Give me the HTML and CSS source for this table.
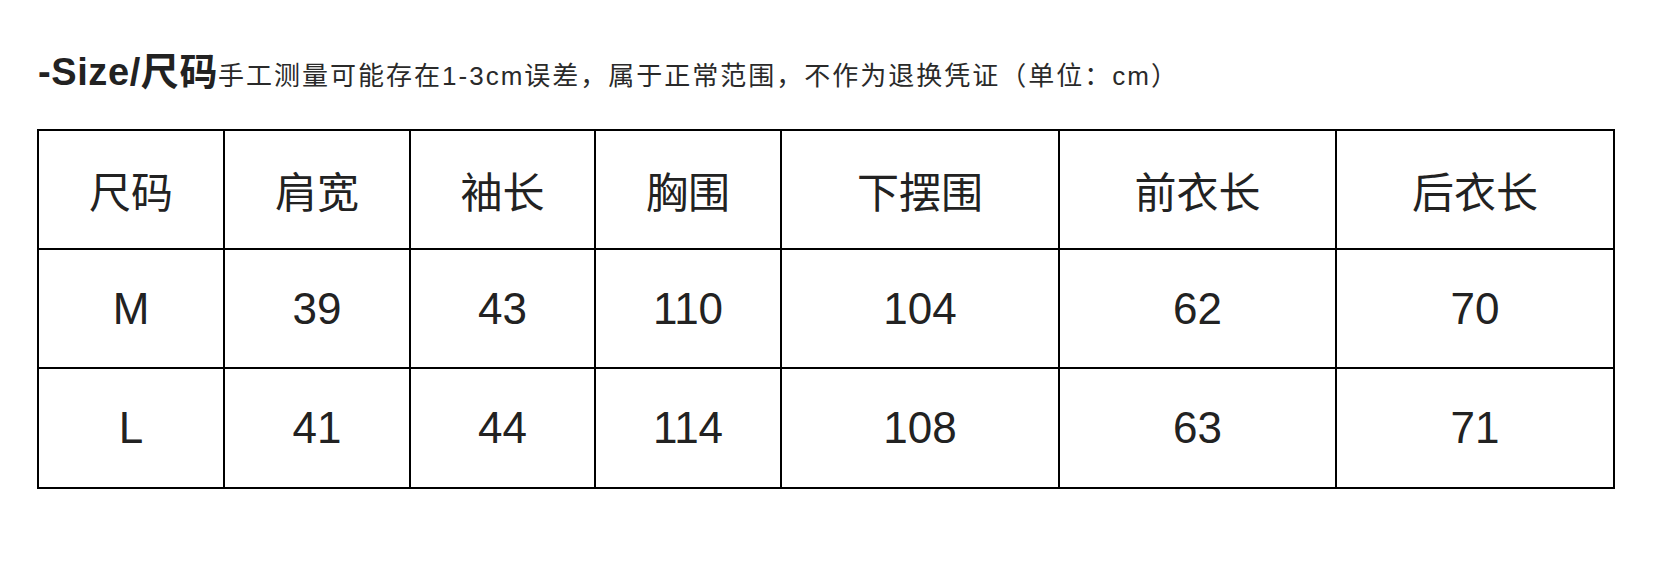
FILE: index.html
```html
<!DOCTYPE html>
<html lang="zh-CN">
<head>
<meta charset="utf-8">
<title>Size</title>
<link rel="stylesheet" href="styles.css">
</head>
<body>
<div class="page">
  <div class="title"><span class="title-main">-Size/尺码</span><span class="title-note">手工测量可能存在1-3cm误差，属于正常范围，不作为退换凭证（单位：cm）</span></div>
  <table class="size-table">
    <colgroup>
      <col class="c-narrow"><col class="c-narrow"><col class="c-narrow3"><col class="c-narrow"><col class="c-wide"><col class="c-wide2"><col class="c-wide">
    </colgroup>
    <thead>
      <tr class="row-head"><th>尺码</th><th>肩宽</th><th>袖长</th><th>胸围</th><th>下摆围</th><th>前衣长</th><th>后衣长</th></tr>
    </thead>
    <tbody>
      <tr class="row-data"><td>M</td><td>39</td><td>43</td><td>110</td><td>104</td><td>62</td><td>70</td></tr>
      <tr class="row-data row-last"><td>L</td><td>41</td><td>44</td><td>114</td><td>108</td><td>63</td><td>71</td></tr>
    </tbody>
  </table>
</div>
</body>
</html>
```
FILE: styles.css
```css
html, body {
  margin: 0;
  padding: 0;
  background: #ffffff;
}
body {
  font-family: "Liberation Sans", "Noto Sans CJK SC", sans-serif;
  color: #222222;
}
.page {
  padding: 50px 43px 0 37px;
}
.title {
  height: 44px;
  line-height: 44px;
  white-space: nowrap;
  margin: 0 0 35px 1px;
}
.title-main {
  font-size: 38px;
  font-weight: 700;
  letter-spacing: 0.6px;
  color: #222222;
}
.title-note {
  font-size: 26px;
  letter-spacing: 2px;
  color: #2a2a2a;
}
.size-table {
  border-collapse: collapse;
  table-layout: fixed;
  width: 1578px;
}
.c-narrow { width: 186px; }
.c-narrow3 { width: 185px; }
.c-wide { width: 278px; }
.c-wide2 { width: 277px; }
.size-table th,
.size-table td {
  border: 2px solid #000000;
  text-align: center;
  vertical-align: middle;
  padding: 0;
  color: #222222;
}
.size-table th {
  font-weight: 400;
  font-size: 42px;
  height: 117px;
}
.size-table td {
  font-size: 44px;
  height: 117px;
}
.row-last td {
  height: 118px;
}
```
